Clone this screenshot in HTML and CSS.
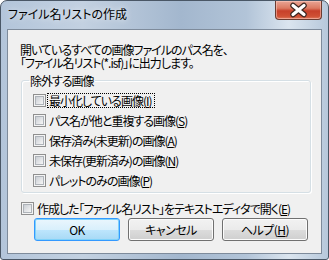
FILE: index.html
```html
<!DOCTYPE html>
<html lang="ja">

<head>
  <meta charset="UTF-8" />
  <title>ファイル名リストの作成</title>
  <link rel="stylesheet" href="styles.css">
</head>

<body>
  <div class="window">
    <div class="titlebar">
      <span class="title">ファイル名リストの作成</span>
      <div class="close">
        <svg width="45" height="18" viewBox="0 0 45 18">
          <path d="M17 4.5 L28 13.5 M28 4.5 L17 13.5" stroke="#3c2620" stroke-width="5.5" stroke-linecap="round" fill="none" />
          <path d="M17 4.5 L28 13.5 M28 4.5 L17 13.5" stroke="#ffffff" stroke-width="3.2" stroke-linecap="round" fill="none" />
        </svg>
      </div>
    </div>

    <div class="client">
      <p class="intro">開いているすべての画像ファイルのパス名を、<br>「ファイル名リスト(*.isf)」に出力します。</p>

      <!-- 除外する画像 -->
      <fieldset class="group">
        <legend>除外する画像</legend>
        <label class="check"><span class="box"></span><span class="text focus">最小化している画像(<u>I</u>)</span></label>
        <label class="check"><span class="box"></span><span class="text">パス名が他と重複する画像(<u>S</u>)</span></label>
        <label class="check"><span class="box"></span><span class="text">保存済み(未更新)の画像(<u>A</u>)</span></label>
        <label class="check"><span class="box"></span><span class="text">未保存(更新済み)の画像(<u>N</u>)</span></label>
        <label class="check"><span class="box"></span><span class="text">パレットのみの画像(<u>P</u>)</span></label>
      </fieldset>

      <label class="check open-editor"><span class="box"></span><span class="text">作成した「ファイル名リスト」をテキストエディタで開く(<u>E</u>)</span></label>

      <div class="buttons">
        <button class="btn default">OK</button>
        <button class="btn">キャンセル</button>
        <button class="btn">ヘルプ(<u>H</u>)</button>
      </div>
    </div>
  </div>
</body>

</html>
```

FILE: styles.css
```css
body {
  margin: 0;
  background-color: #ffffff;
  font-family: "Noto Sans CJK JP", "Liberation Sans", sans-serif;
  font-size: 12px;
  font-feature-settings: "palt";
  letter-spacing: -1px;
  color: #000;
}

.window {
  width: 329px;
  height: 260px;
  box-sizing: border-box;
  border: 1px solid #4a5766;
  border-radius: 7px 7px 3px 3px;
  background: linear-gradient(90deg, #b3c5da 0%, #c3d1e1 25%, #a3b7ce 55%, #b2c4d8 75%, #dbe5ef 88%, #b7c8db 100%);
  display: flex;
  flex-direction: column;
}

/* タイトルバー */
.titlebar {
  height: 28px;
  display: flex;
  justify-content: space-between;
  align-items: flex-start;
  padding: 0 6px 0 7px;
}

.title {
  margin-top: 5px;
  line-height: 15px;
  letter-spacing: 0;
  text-shadow: 0 0 6px rgba(255, 255, 255, 0.9);
}

.close {
  width: 47px;
  height: 19px;
  box-sizing: border-box;
  border: 1px solid #6b3b30;
  border-top: none;
  border-radius: 0 0 4px 4px;
  background: linear-gradient(180deg, #e9a595 0%, #dc7a62 40%, #c7402a 55%, #cf5034 85%, #de7a5e 100%);
  box-shadow: inset 0 0 0 1px rgba(255, 210, 200, 0.5);
}

.close svg {
  display: block;
}

/* クライアント領域 */
.client {
  margin: 0 6px 5px 6px;
  flex: 1;
  background-color: #f0f0f0;
  border: 1px solid #7e8b9b;
  padding: 13px 0 0 13px;
}

.intro {
  margin: 0 0 0 -1px;
  line-height: 13px;
}

.group {
  width: 290px;
  box-sizing: border-box;
  margin: 5px 0 0 0;
  padding: 3px 0 2px 11px;
  border: 1px solid #d5dfe5;
  border-radius: 3px;
  box-shadow: inset 1px 1px 0 #ffffff, 1px 1px 0 #ffffff;
}

.group legend {
  line-height: 13px;
  padding: 0 1px;
  margin-left: -4px;
}

.check {
  display: flex;
  align-items: center;
  height: 20px;
  gap: 2px;
}

.box {
  position: relative;
  width: 13px;
  height: 13px;
  box-sizing: border-box;
  border: 1px solid #8f8f8f;
  background-color: #f4f4f4;
  flex-shrink: 0;
}

.box::after {
  content: "";
  position: absolute;
  left: 1px;
  top: 1px;
  width: 7px;
  height: 7px;
  border: 1px solid #aeb3b9;
  background: linear-gradient(135deg, #cbcfd5, #f6f6f6);
}

.text {
  line-height: 13px;
  padding: 0 2px 0 1px;
}

.text.focus {
  outline: 1px dotted #000;
}

.open-editor {
  height: 19px;
  margin-top: 6px;
}

/* ボタン */
.buttons {
  display: flex;
  gap: 8px;
  padding-left: 13px;
}

.btn {
  width: 86px;
  height: 23px;
  border: 1px solid #707070;
  border-radius: 3px;
  background: linear-gradient(180deg, #f2f2f2 0%, #ebebeb 50%, #dddddd 50%, #cfcfcf 100%);
  box-shadow: inset 0 0 0 1px #fcfcfc;
  font-family: "Noto Sans CJK JP", "Liberation Sans", sans-serif;
  font-size: 12px;
  font-feature-settings: "palt";
  letter-spacing: -0.5px;
  padding: 0;
  color: #000;
}

.btn.default {
  border-color: #3399ff;
  background: linear-gradient(180deg, #eaf6fd 0%, #d9f0fc 50%, #bee6fd 50%, #a7d9f5 100%);
  box-shadow: inset 0 0 0 1px #7fd2fa;
}
```
